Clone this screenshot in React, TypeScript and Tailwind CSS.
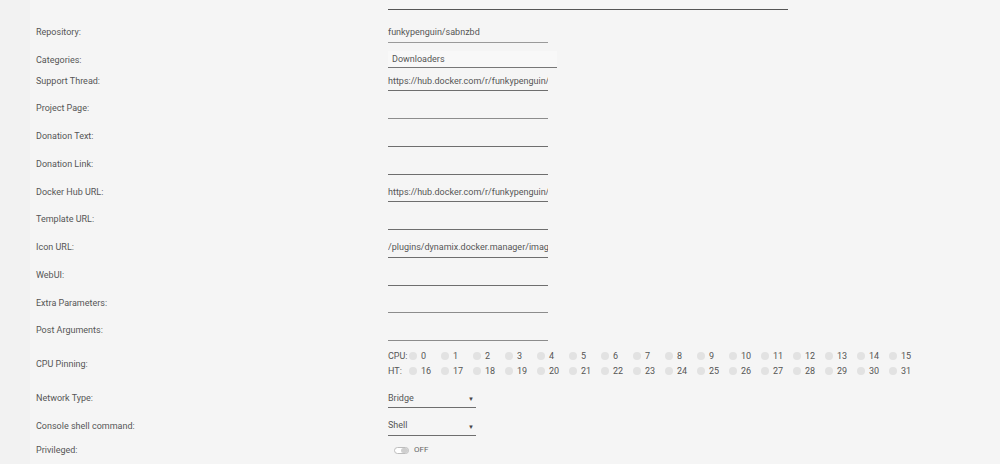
import React from "react";

const font = { fontFamily: 'Roboto, "Noto Sans", sans-serif' };

function Label({ children }: { children: React.ReactNode }) {
  return <div className="w-[352px] shrink-0 pt-[1px] text-[9px] text-[#555]">{children}</div>;
}

function TextRow({ label, value, dark }: { label: string; value?: string; dark?: boolean }) {
  return (
    <div className="flex h-[27.75px] items-center">
      <Label>{label}</Label>
      <div
        className={`mt-[1px] flex h-[20px] w-[160px] items-center overflow-hidden whitespace-nowrap border-b pt-[1px] text-[9px] text-[#555] ${
          dark ? "border-[#6e6e6e]" : "border-[#8c8c8c]"
        }`}
      >
        {value}
      </div>
    </div>
  );
}

function SelectRow({ label, value }: { label: string; value: string }) {
  return (
    <div className="flex h-[27.75px] items-center">
      <Label>{label}</Label>
      <div className="flex h-[20px] w-[88px] items-center justify-between border-b border-[#6e6e6e] pr-[2px] pt-[1px] text-[9px] text-[#555]">
        <span>{value}</span>
        <span className="text-[6px] text-[#444]">▼</span>
      </div>
    </div>
  );
}

function CoreLine({ tag, start }: { tag: string; start: number }) {
  const cores = Array.from({ length: 16 }, (_, i) => start + i);
  return (
    <div className="flex h-[15px] items-center text-[9px] text-[#555]">
      <span className="w-[21px] shrink-0">{tag}</span>
      {cores.map((n) => (
        <div key={n} className="flex w-[32px] shrink-0 items-center">
          <span className="mb-[3px] h-[8px] w-[8px] rounded-full bg-[#e2e2e2]" />
          <span className="ml-[4px]">{n}</span>
        </div>
      ))}
    </div>
  );
}

export default function App() {
  return (
    <div className="flex h-[464px] w-[1000px] overflow-hidden bg-[#f2f2f2]" style={font}>
      <div className="w-[30px] shrink-0" />
      <div className="flex-1 bg-[#f5f5f5] pl-[6px]">
        <div className="pt-[9px]">
          <div className="ml-[352px] h-px w-[400px] bg-[#555]" />
        </div>

        {/* Repository */}
        <div className="mt-[8px] flex h-[28px] items-center">
          <Label>Repository:</Label>
          <div className="mt-[1px] flex h-[20px] w-[160px] items-center border-b border-[#9a9a9a] pt-[1px] text-[9px] text-[#555]">
            funkypenguin/sabnzbd
          </div>
        </div>

        {/* Categories */}
        <div className="flex h-[21px] items-start">
          <div className="mt-[7px]">
            <Label>Categories:</Label>
          </div>
          <div className="mt-[5px] flex h-[17px] w-[169px] items-center border-b border-[#777] bg-[#f8f8f8] pl-[4px] pt-[1px] text-[9px] text-[#555]">
            Downloaders
          </div>
        </div>

        <TextRow label="Support Thread:" value="https://hub.docker.com/r/funkypenguin/" dark />
        <TextRow label="Project Page:" />
        <TextRow label="Donation Text:" dark />
        <TextRow label="Donation Link:" dark />
        <TextRow label="Docker Hub URL:" value="https://hub.docker.com/r/funkypenguin/" dark />
        <TextRow label="Template URL:" dark />
        <TextRow label="Icon URL:" value="/plugins/dynamix.docker.manager/images/question.png" dark />
        <TextRow label="WebUI:" dark />
        <TextRow label="Extra Parameters:" />
        <TextRow label="Post Arguments:" />

        {/* CPU Pinning */}
        <div className="flex h-[40px] items-center">
          <Label>CPU Pinning:</Label>
          <div className="flex flex-col">
            <CoreLine tag="CPU:" start={0} />
            <CoreLine tag="HT:" start={16} />
          </div>
        </div>

        <SelectRow label="Network Type:" value="Bridge" />
        <SelectRow label="Console shell command:" value="Shell" />

        {/* Privileged */}
        <div className="flex h-[20px] items-center">
          <Label>Privileged:</Label>
          <div className="ml-[6px] flex items-center">
            <div className="relative h-[7px] w-[15px] rounded-full border border-[#bdbdbd] bg-white">
              <span className="absolute right-0 top-0 h-[5px] w-[7px] rounded-full bg-[#cfcfcf]" />
            </div>
            <span className="ml-[5px] text-[8px] text-[#666]">OFF</span>
          </div>
        </div>
      </div>
    </div>
  );
}
